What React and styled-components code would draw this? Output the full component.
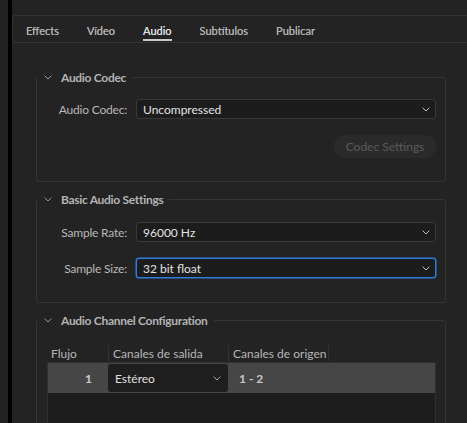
import React from 'react'
import styled, { createGlobalStyle } from 'styled-components'

const GlobalStyle = createGlobalStyle`
    html, body {
        margin: 0;
        padding: 0;
        background: #232323;
        font-family: Lato, "Liberation Sans", sans-serif;
        font-size: 12px;
        overflow: hidden;
    }
    * { box-sizing: border-box; }
`

const Shell = styled.div`
    display: flex;
    height: 423px;
`

const SideStrip = styled.div`
    width: 8px;
    background: #212121;
`

const BlackBar = styled.div`
    width: 4px;
    background: #000;
`

const Main = styled.div`
    flex: 1;
    padding-top: 15px;
    overflow: hidden;
`

const TabBar = styled.div`
    display: flex;
    align-items: stretch;
    height: 28px;
    border: 1px solid #333;
    border-right: none;
    border-radius: 3px 0 0 3px;
    padding-left: 13px;
    gap: 28px;
`

const Tab = styled.div`
    position: relative;
    display: flex;
    align-items: center;
    color: ${(p) => (p.active ? '#dedede' : '#b0b0b0')};
    font-weight: 400;
    font-size: 11px;
    padding-top: 3px;
    text-shadow: 0 0 0.5px currentColor;

    &::after {
        content: '';
        display: ${(p) => (p.active ? 'block' : 'none')};
        position: absolute;
        left: 0;
        right: 0;
        bottom: 1px;
        height: 2px;
        background: #c9c9c9;
    }
`

const Content = styled.div`
    padding: 26px 21px 0 24px;
    display: flex;
    flex-direction: column;
    gap: 9px;
`

const Group = styled.fieldset`
    margin: 0;
    border: 1px solid #353535;
    border-radius: 3px;
    padding: 0 9px ${(p) => p.bottom}px 0;
    min-width: 0;
`

const Legend = styled.legend`
    display: flex;
    align-items: center;
    height: 16px;
    padding: 0 6px 0 6px;
    margin-left: 1px;
    color: #b4b4b4;
    font-weight: 700;
    font-size: 12px;
    letter-spacing: -0.3px;
    gap: 9px;
`

const Chevron = ({ color = '#9a9a9a' }) => (
    <svg width="8" height="5" viewBox="0 0 8 5">
        <path d="M0.6 0.6 L4 4 L7.4 0.6" fill="none" stroke={color} strokeWidth="1" />
    </svg>
)

const FormRow = styled.div`
    display: grid;
    grid-template-columns: 90px 1fr;
    column-gap: 9px;
    align-items: center;
    margin-top: ${(p) => p.top}px;
`

const Label = styled.div`
    text-align: right;
    color: #b8b8b8;
    font-size: 12px;
    letter-spacing: -0.2px;
`

const Select = styled.div`
    display: flex;
    align-items: center;
    justify-content: space-between;
    height: 20px;
    padding: 0 5px 0 6px;
    background: #1c1c1c;
    border: 1px solid ${(p) => (p.focused ? '#2f7ddc' : '#383838')};
    box-shadow: ${(p) => (p.focused ? '0 0 0 0.5px #2f7ddc' : 'none')};
    border-radius: 3px;
    color: #e2e2e2;
    font-size: 12px;
`

const ButtonRow = styled.div`
    display: flex;
    justify-content: flex-end;
    margin-top: 16px;
`

const PillButton = styled.div`
    display: flex;
    align-items: center;
    justify-content: center;
    width: 102px;
    height: 23px;
    border-radius: 12px;
    background: #2a2a2a;
    color: #5b5b5b;
    font-size: 12px;
`

const Table = styled.div`
    margin: 16px 0 0 10px;
`

const HeaderRow = styled.div`
    display: grid;
    grid-template-columns: 61px 120px 101px;
    height: 18px;
`

const HeaderCell = styled.div`
    display: flex;
    align-items: center;
    padding-left: 4px;
    color: #b6b6b6;
    font-size: 12px;
    border-left: ${(p) => (p.first ? 'none' : '1px solid #333')};
    border-right: ${(p) => (p.last ? '1px solid #333' : 'none')};
    margin: 1px 0 1px;
`

const Body = styled.div`
    background: #1d1d1d;
    border: 1px solid #303030;
    height: 80px;
`

const DataRow = styled.div`
    display: grid;
    grid-template-columns: 60px 120px 1fr;
    height: 30px;
    background: #464646;
`

const NumCell = styled.div`
    display: flex;
    align-items: center;
    justify-content: flex-end;
    padding-right: 16px;
    color: #cfcfcf;
    font-weight: 700;
`

const CellSelect = styled.div`
    display: flex;
    align-items: center;
    justify-content: space-between;
    margin: 1px 0;
    padding: 0 7px 0 7px;
    background: #1e1e1e;
    border-radius: 3px;
    color: #e0e0e0;
`

const SourceCell = styled.div`
    display: flex;
    align-items: center;
    padding-left: 11px;
    color: #c8c8c8;
    font-weight: 700;
`

const tabs = ['Effects', 'Vídeo', 'Audio', 'Subtítulos', 'Publicar']

export default function App() {
    return (
        <>
            <GlobalStyle />
            <Shell>
                <SideStrip />
                <BlackBar />
                <Main>
                    <TabBar>
                        {tabs.map((t) => (
                            <Tab key={t} active={t === 'Audio'}>{t}</Tab>
                        ))}
                    </TabBar>
                    <Content>
                        <Group bottom={23}>
                            <Legend><Chevron />Audio Codec</Legend>
                            <FormRow top={14}>
                                <Label>Audio Codec:</Label>
                                <Select>Uncompressed<Chevron color="#bdbdbd" /></Select>
                            </FormRow>
                            <ButtonRow>
                                <PillButton>Codec Settings</PillButton>
                            </ButtonRow>
                        </Group>
                        <Group bottom={24}>
                            <Legend><Chevron />Basic Audio Settings</Legend>
                            <FormRow top={15}>
                                <Label>Sample Rate:</Label>
                                <Select>96000 Hz<Chevron color="#bdbdbd" /></Select>
                            </FormRow>
                            <FormRow top={16}>
                                <Label>Sample Size:</Label>
                                <Select focused>32 bit float<Chevron color="#bdbdbd" /></Select>
                            </FormRow>
                        </Group>
                        <Group bottom={0}>
                            <Legend><Chevron />Audio Channel Configuration</Legend>
                            <Table>
                                <HeaderRow>
                                    <HeaderCell first>Flujo</HeaderCell>
                                    <HeaderCell>Canales de salida</HeaderCell>
                                    <HeaderCell last>Canales de origen</HeaderCell>
                                </HeaderRow>
                                <Body>
                                    <DataRow>
                                        <NumCell>1</NumCell>
                                        <CellSelect>Estéreo<Chevron color="#a8a8a8" /></CellSelect>
                                        <SourceCell>1 - 2</SourceCell>
                                    </DataRow>
                                </Body>
                            </Table>
                        </Group>
                    </Content>
                </Main>
            </Shell>
        </>
    )
}
